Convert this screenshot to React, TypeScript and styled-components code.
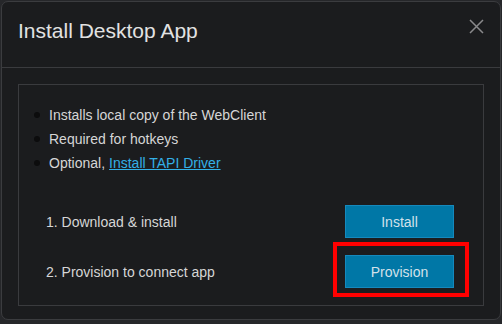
import React from 'react';
import styled, { createGlobalStyle } from 'styled-components';

const GlobalStyle = createGlobalStyle`
  html, body {
    margin: 0;
    padding: 0;
    background: #26272a;
    font-family: 'Liberation Sans', Arial, sans-serif;
  }
`;

const Page = styled('div')`
  width: 502px;
  height: 324px;
  padding: 1px;
  box-sizing: border-box;
  overflow: hidden;
`;

const Modal = styled('div')`
  width: 500px;
  height: 319px;
  box-sizing: border-box;
  background: #1b1c1e;
  border: 1px solid #3b3c3f;
  border-radius: 7px;
  display: flex;
  flex-direction: column;
`;

const Header = styled('div')`
  height: 66px;
  box-sizing: border-box;
  padding: 17px 16px 0 16px;
  border-bottom: 1px solid #3a3b3e;
  display: flex;
  justify-content: space-between;
  align-items: flex-start;
`;

const Title = styled('h2')`
  margin: 0;
  font-size: 21px;
  line-height: 24px;
  font-weight: normal;
  color: #e2e2e2;
`;

const CloseButton = styled('button')`
  background: none;
  border: none;
  padding: 0;
  width: 15px;
  height: 15px;
  cursor: pointer;
  display: flex;
`;

const Body = styled('div')`
  padding: 16px 16px 13px 16px;
`;

const Box = styled('div')`
  border: 1px solid #3a3b3e;
  height: 222px;
  box-sizing: border-box;
  padding: 18px 29px 0 27px;
`;

const List = styled('ul')`
  margin: 0;
  padding: 0 0 0 3px;
  list-style: none;
  font-size: 14px;
  line-height: 24px;
  color: #d6d6d6;
`;

const Item = styled('li')`
  display: flex;
  align-items: center;
  &::before {
    content: '';
    width: 6px;
    height: 6px;
    border-radius: 50%;
    background: #0c0c0d;
    margin: 0 9px 0 -15px;
  }
`;

const Link = styled('a')`
  color: #33b0e6;
  text-decoration: underline;
  margin-left: 4px;
`;

const Steps = styled('div')`
  margin-top: 30px;
  display: flex;
  flex-direction: column;
  gap: 17px;
`;

const StepRow = styled('div')`
  display: flex;
  justify-content: space-between;
  align-items: center;
  height: 33px;
`;

const StepLabel = styled('span')`
  font-size: 14px;
  color: #d6d6d6;
`;

const ButtonWrap = styled('div')`
  position: relative;
`;

const ActionButton = styled('button')`
  width: 109px;
  height: 33px;
  box-sizing: border-box;
  background: #0077a6;
  border: 1px solid #1589bd;
  color: #d3e1ea;
  font-family: 'Liberation Sans', Arial, sans-serif;
  font-size: 14px;
  cursor: pointer;
`;

const Highlight = styled('div')`
  position: absolute;
  left: -12px;
  top: -13px;
  width: 136px;
  height: 55px;
  box-sizing: border-box;
  border: 4px solid #ff0000;
  pointer-events: none;
`;

export default function App() {
  return (
    <Page>
      <GlobalStyle />
      <Modal>
        <Header>
          <Title>Install Desktop App</Title>
          <CloseButton aria-label="Close">
            <svg width="15" height="15" viewBox="0 0 15 15">
              <path d="M1 1 L14 14 M14 1 L1 14" stroke="#8a8a8c" strokeWidth="1.5" fill="none" />
            </svg>
          </CloseButton>
        </Header>
        <Body>
          <Box>
            <List>
              <Item>Installs local copy of the WebClient</Item>
              <Item>Required for hotkeys</Item>
              <Item>
                Optional,<Link href="#">Install TAPI Driver</Link>
              </Item>
            </List>
            <Steps>
              <StepRow>
                <StepLabel>1. Download &amp; install</StepLabel>
                <ActionButton>Install</ActionButton>
              </StepRow>
              <StepRow>
                <StepLabel>2. Provision to connect app</StepLabel>
                <ButtonWrap>
                  <ActionButton>Provision</ActionButton>
                  <Highlight />
                </ButtonWrap>
              </StepRow>
            </Steps>
          </Box>
        </Body>
      </Modal>
    </Page>
  );
}
